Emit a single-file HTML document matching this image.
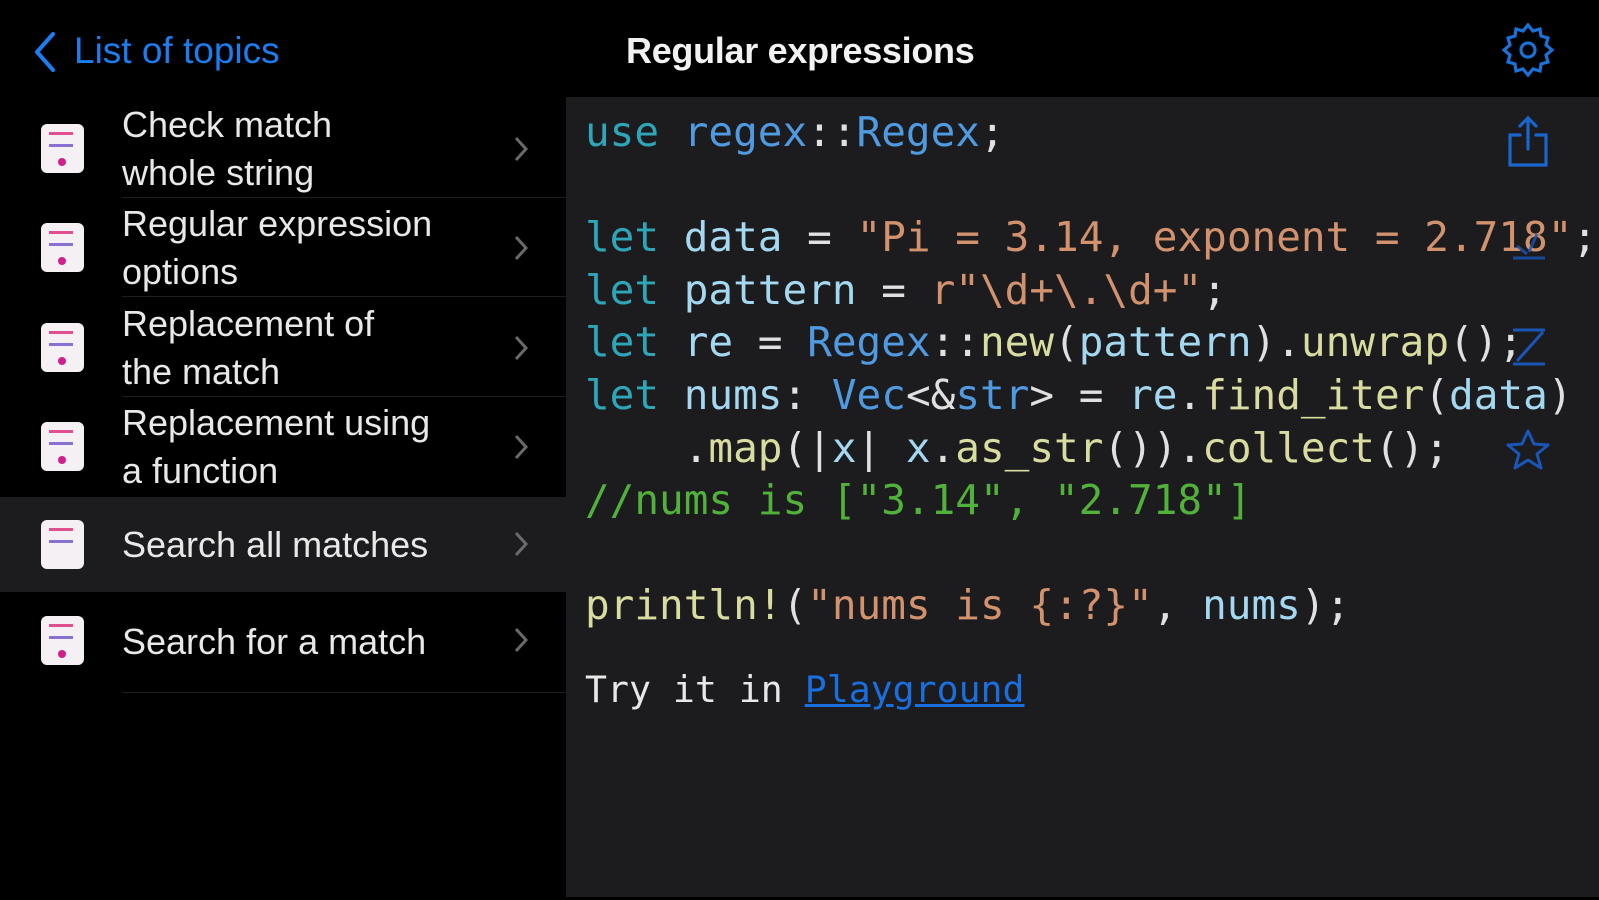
<!DOCTYPE html>
<html><head><meta charset="utf-8"><style>
html,body{margin:0;padding:0;background:#000;width:1599px;height:900px;overflow:hidden;font-family:"Liberation Sans",sans-serif}
.abs{position:absolute}
.back{left:74px;top:30px;color:#1a7ef0;font-size:37px}
.title{left:626px;top:30px;color:#f2f2f2;font-size:36px;font-weight:bold;letter-spacing:-0.3px}
.code{left:566px;top:97px;width:1033px;height:800px;background:#1c1c1e}
.row{position:absolute;left:0;width:566px;height:99px}
.row .t{position:absolute;left:122px;color:#e8e8e8;font-size:36px;line-height:48px}
.row .chev{position:absolute;left:511px;top:35px}
.row .ic{position:absolute;left:41px;top:25px;width:43px;height:49px;background:#f4f0f4;border-radius:6px;overflow:hidden}
.ic i{position:absolute;left:8px;height:3px;width:24px}
.ic b{position:absolute;left:17px;top:34px;width:8px;height:8px;border-radius:50%;background:#d0208a}
.row .sep{position:absolute;left:122px;right:0;bottom:0;height:1px;background:#1e1e1e}
pre{margin:0;position:absolute;left:585px;top:106px;font-family:"DejaVu Sans Mono","Liberation Mono",monospace;font-size:41px;line-height:52.6px;color:#e0e0e0}
.k{color:#2fa5b8}.b{color:#4f9ae0}.v{color:#a4d8f0}.s{color:#d2926e}.f{color:#d9dca0}.c{color:#52b13a}
</style></head><body>
<svg class="abs" style="left:31px;top:31px" width="26" height="42"><path d="M22 3 L6 21 L22 39" stroke="#1a7ef0" stroke-width="4" fill="none" stroke-linecap="round" stroke-linejoin="round"/></svg>
<div class="abs back">List of topics</div>
<div class="abs title">Regular expressions</div>
<svg class="abs" style="left:1499px;top:21px" width="58" height="58" viewBox="0 0 58 58"><g fill="none" stroke="#1a72d8" stroke-width="3.2"><path d="M29 4l5 6 7-2 1 7 7 2-2 7 6 5-6 5 2 7-7 2-1 7-7-2-5 6-5-6-7 2-1-7-7-2 2-7-6-5 6-5-2-7 7-2 1-7 7 2z"/><circle cx="29" cy="29" r="7"/></g></svg>

<div class="abs code"></div>

<div class="row" style="top:99px"><div class="ic"><i style="top:8px;background:#e05090"></i><i style="top:20px;background:#8a70d0"></i><b></b></div><div class="t" style="top:2px">Check match<br>whole string</div><svg class="chev" width="20" height="30"><path d="M5 4l10 11-10 11" stroke="#6a6a6a" stroke-width="3" fill="none"/></svg><div class="sep"></div></div>
<div class="row" style="top:198px"><div class="ic"><i style="top:8px;background:#e05090"></i><i style="top:20px;background:#8a70d0"></i><b></b></div><div class="t" style="top:2px">Regular expression<br>options</div><svg class="chev" width="20" height="30"><path d="M5 4l10 11-10 11" stroke="#6a6a6a" stroke-width="3" fill="none"/></svg><div class="sep"></div></div>
<div class="row" style="top:298px"><div class="ic"><i style="top:8px;background:#e05090"></i><i style="top:20px;background:#8a70d0"></i><b></b></div><div class="t" style="top:2px">Replacement of<br>the match</div><svg class="chev" width="20" height="30"><path d="M5 4l10 11-10 11" stroke="#6a6a6a" stroke-width="3" fill="none"/></svg><div class="sep"></div></div>
<div class="row" style="top:397px"><div class="ic"><i style="top:8px;background:#e05090"></i><i style="top:20px;background:#8a70d0"></i><b></b></div><div class="t" style="top:2px">Replacement using<br>a function</div><svg class="chev" width="20" height="30"><path d="M5 4l10 11-10 11" stroke="#6a6a6a" stroke-width="3" fill="none"/></svg></div>
<div class="row" style="top:497px;height:95px;background:#1c1c1e"><div class="ic" style="top:23px"><i style="top:8px;background:#e05090"></i><i style="top:20px;background:#8a70d0"></i></div><div class="t" style="top:24px">Search all matches</div><svg class="chev" width="20" height="30" style="top:32px"><path d="M5 4l10 11-10 11" stroke="#6a6a6a" stroke-width="3" fill="none"/></svg></div>
<div class="row" style="top:592px"><div class="ic" style="top:24px"><i style="top:8px;background:#e05090"></i><i style="top:20px;background:#8a70d0"></i><b></b></div><div class="t" style="top:26px">Search for a match</div><svg class="chev" width="20" height="30" style="top:33px"><path d="M5 4l10 11-10 11" stroke="#6a6a6a" stroke-width="3" fill="none"/></svg><div class="sep" style="bottom:-2px"></div></div>

<pre><span class="k">use</span> <span class="b">regex</span>::<span class="b">Regex</span>;

<span class="k">let</span> <span class="v">data</span> = <span class="s">"Pi = 3.14, exponent = 2.718"</span>;
<span class="k">let</span> <span class="v">pattern</span> = <span class="s">r"\d+\.\d+"</span>;
<span class="k">let</span> <span class="v">re</span> = <span class="b">Regex</span>::<span class="f">new</span>(<span class="v">pattern</span>).<span class="f">unwrap</span>();
<span class="k">let</span> <span class="v">nums</span>: <span class="b">Vec</span>&lt;&amp;<span class="b">str</span>&gt; = <span class="v">re</span>.<span class="f">find_iter</span>(<span class="v">data</span>)
    .<span class="f">map</span>(|<span class="v">x</span>| <span class="v">x</span>.<span class="f">as_str</span>()).<span class="f">collect</span>();
<span class="c">//nums is ["3.14", "2.718"]</span>

<span class="f">println!</span>(<span class="s">"nums is {:?}"</span>, <span class="v">nums</span>);</pre>
<div class="abs" style="left:585px;top:668px;font-family:'DejaVu Sans Mono','Liberation Mono',monospace;font-size:36.5px;color:#e8e8e8">Try it in <span style="color:#1a6fe0;text-decoration:underline">Playground</span></div>

<svg class="abs" style="left:1505px;top:115px" width="46" height="54"><g fill="none" stroke="#1a66cc" stroke-width="3.2" stroke-linecap="round"><path d="M15 20H5v30h36V20H31"/><path d="M23 4v30M15 11l8-8 8 8"/></g></svg>
<svg class="abs" style="left:1509px;top:226px" width="40" height="36"><g fill="none" stroke="#1a55b8" stroke-width="3" opacity="0.8"><path d="M4 32h32M8 20l10 8M28 8l-8 18"/></g></svg>
<svg class="abs" style="left:1509px;top:327px" width="40" height="40"><g fill="none" stroke="#1a55b8" stroke-width="3"><path d="M4 3h32M4 37h32M34 5L8 34"/></g></svg>
<svg class="abs" style="left:1505px;top:428px" width="46" height="46"><path d="M23 3l6 13 14 1-11 9 4 14-13-8-13 8 4-14-11-9 14-1z" fill="none" stroke="#1a55b8" stroke-width="3" stroke-linejoin="round"/></svg>
</body></html>
